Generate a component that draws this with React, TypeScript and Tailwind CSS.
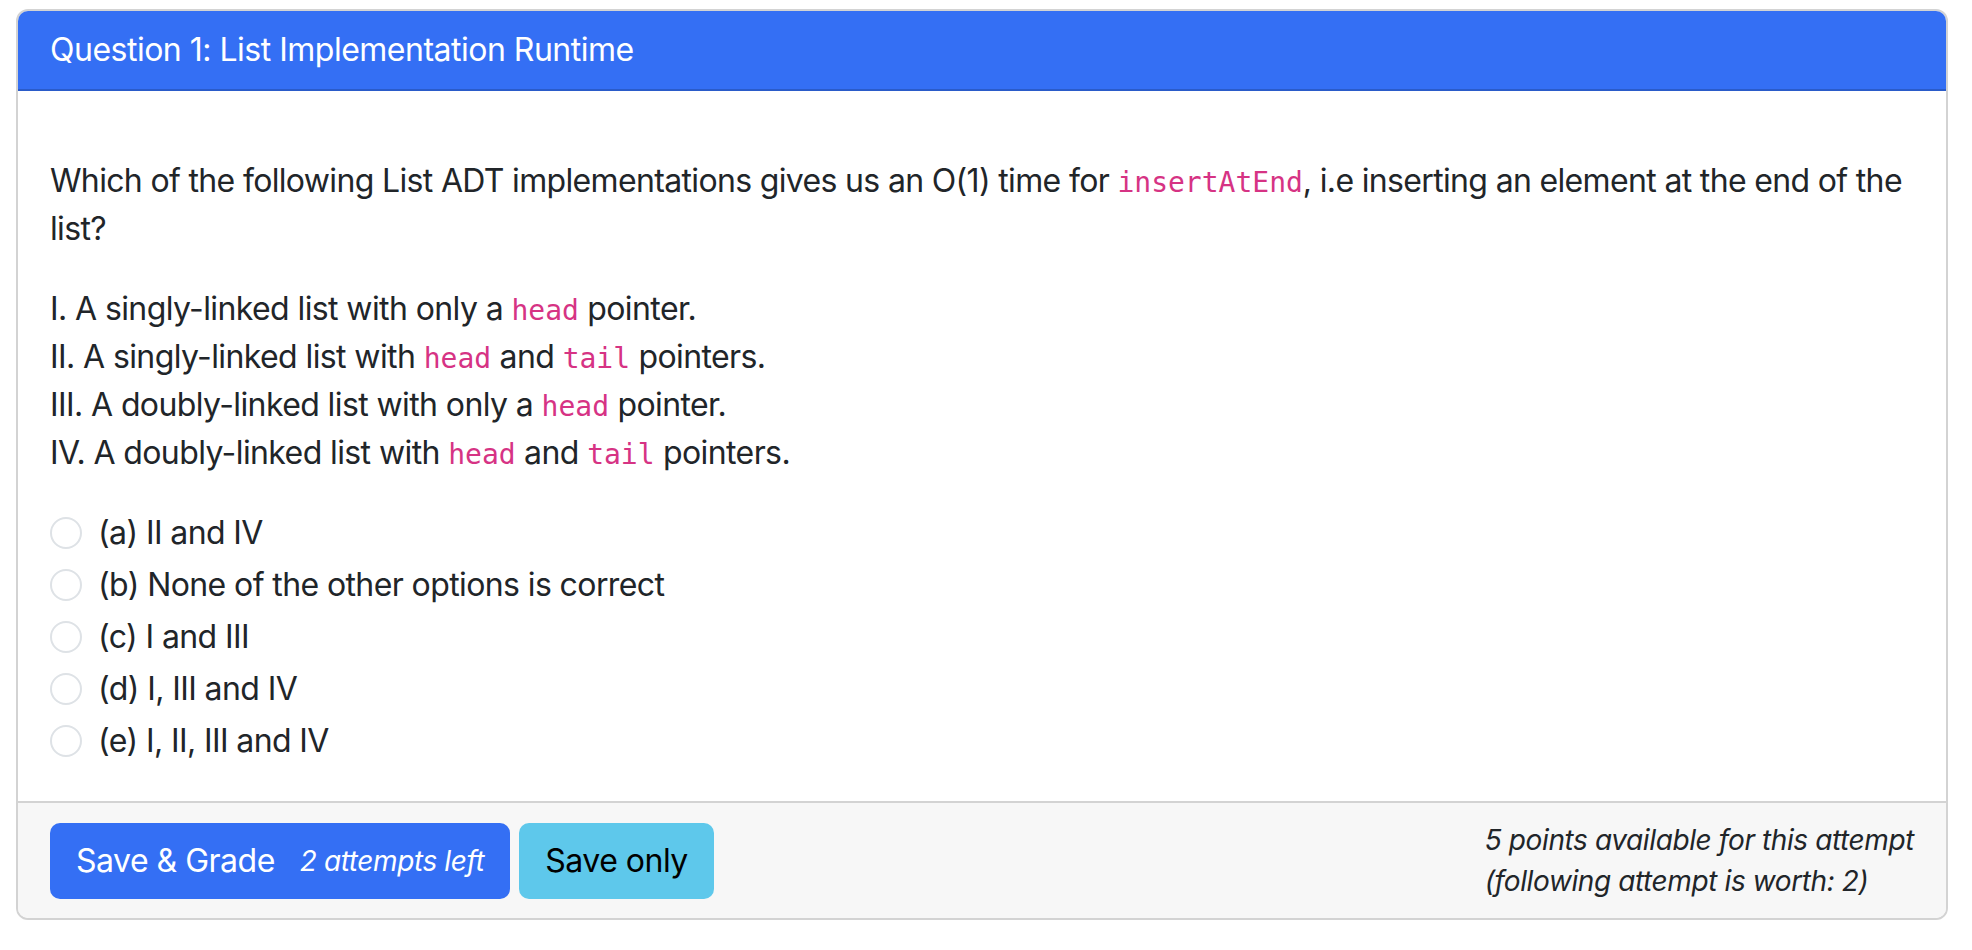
import React from 'react';

const sans = "font-['Inter','Noto_Sans',sans-serif]";

const Code = ({ children }: { children: React.ReactNode }) => (
  <code className="font-['DejaVu_Sans_Mono','Liberation_Mono',monospace] text-[28px] leading-none tracking-normal text-[#d63384]">
    {children}
  </code>
);

const options = [
  '(a) II and IV',
  '(b) None of the other options is correct',
  '(c) I and III',
  '(d) I, III and IV',
  '(e) I, II, III and IV',
];

export default function App() {
  return (
    <div className={`min-h-screen bg-white pt-[9px] pl-[16px] text-[#212529] ${sans}`}>
      <div className="w-[1932px] overflow-hidden rounded-[12px] border-2 border-[#d3d3d3]">
        {/* Header */}
        <div className="border-b-2 border-[#2a5bc9] bg-[#346ff4] px-[32px] py-[15px] text-[32px] leading-[48px] tracking-[-0.5px] text-white">
          Question 1: List Implementation Runtime
        </div>

        {/* Body */}
        <div className="bg-white px-[32px] pt-[66px] pb-[32px] text-[32px] leading-[48px] tracking-[-0.6px]">
          <p className="mb-[32px] tracking-[-0.66px]">
            Which of the following List ADT implementations gives us an O(1) time for{' '}
            <Code>insertAtEnd</Code>, i.e inserting an element at the end of the list?
          </p>
          <p className="mb-[32px]">
            I. A singly-linked list with only a <Code>head</Code> pointer.
            <br />
            II. A singly-linked list with <Code>head</Code> and <Code>tail</Code> pointers.
            <br />
            III. A doubly-linked list with only a <Code>head</Code> pointer.
            <br />
            IV. A doubly-linked list with <Code>head</Code> and <Code>tail</Code> pointers.
          </p>
          <div>
            {options.map((o) => (
              <label key={o} className="mb-[4px] flex h-[48px] items-center">
                <span className="h-[32px] w-[32px] shrink-0 rounded-full border-2 border-[#dee2e6] bg-white" />
                <span className="ml-[16px]">{o}</span>
              </label>
            ))}
          </div>
        </div>

        {/* Footer */}
        <div className="flex h-[117px] items-center justify-between border-t-2 border-[#d3d3d3] bg-[#f7f7f7] px-[32px]">
          <div className="flex items-center gap-[9px]">
            <button className="flex h-[76px] items-center rounded-[10px] bg-[#346ff4] px-[26px] text-[32px] tracking-[-0.5px] text-white">
              Save &amp; Grade
              <span className="ml-[25px] text-[28px] tracking-[-0.4px] italic">2 attempts left</span>
            </button>
            <button className="flex h-[76px] items-center rounded-[10px] bg-[#5ec8eb] px-[26px] text-[32px] tracking-[-0.5px] text-black">
              Save only
            </button>
          </div>
          <div className="text-[28px] leading-[41px] tracking-[-0.4px] italic">
            5 points available for this attempt
            <br />
            (following attempt is worth: 2)
          </div>
        </div>
      </div>
    </div>
  );
}
